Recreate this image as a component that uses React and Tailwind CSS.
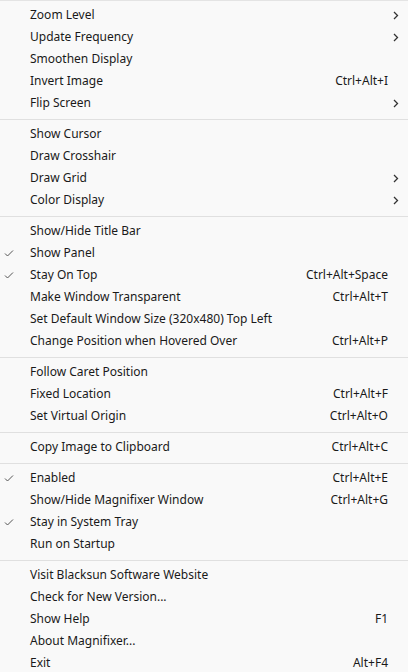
import React from 'react';

const groups = [
  [
    { label: 'Zoom Level', sub: true },
    { label: 'Update Frequency', sub: true },
    { label: 'Smoothen Display' },
    { label: 'Invert Image', key: 'Ctrl+Alt+I' },
    { label: 'Flip Screen', sub: true },
  ],
  [
    { label: 'Show Cursor' },
    { label: 'Draw Crosshair' },
    { label: 'Draw Grid', sub: true },
    { label: 'Color Display', sub: true },
  ],
  [
    { label: 'Show/Hide Title Bar' },
    { label: 'Show Panel', checked: true },
    { label: 'Stay On Top', checked: true, key: 'Ctrl+Alt+Space' },
    { label: 'Make Window Transparent', key: 'Ctrl+Alt+T' },
    { label: 'Set Default Window Size (320x480) Top Left' },
    { label: 'Change Position when Hovered Over', key: 'Ctrl+Alt+P' },
  ],
  [
    { label: 'Follow Caret Position' },
    { label: 'Fixed Location', key: 'Ctrl+Alt+F' },
    { label: 'Set Virtual Origin', key: 'Ctrl+Alt+O' },
  ],
  [{ label: 'Copy Image to Clipboard', key: 'Ctrl+Alt+C' }],
  [
    { label: 'Enabled', checked: true, key: 'Ctrl+Alt+E' },
    { label: 'Show/Hide Magnifixer Window', key: 'Ctrl+Alt+G' },
    { label: 'Stay in System Tray', checked: true },
    { label: 'Run on Startup' },
  ],
  [
    { label: 'Visit Blacksun Software Website' },
    { label: 'Check for New Version...' },
    { label: 'Show Help', key: 'F1' },
    { label: 'About Magnifixer...' },
    { label: 'Exit', key: 'Alt+F4' },
  ],
];

const Check = () => (
  <svg width="10" height="8" viewBox="0 0 10 8" className="ml-[4px]">
    <path d="M1 4.5 L3.5 7 L9 1.5" fill="none" stroke="#555" strokeWidth="1" />
  </svg>
);

const Chevron = () => (
  <svg width="6" height="9" viewBox="0 0 6 9">
    <path d="M1 1 L4.5 4.5 L1 8" fill="none" stroke="#333" strokeWidth="1.3" />
  </svg>
);

const MenuRow = ({ item }) => (
  <div className="flex h-[22px] items-center">
    <div className="flex w-[30px] items-center">{item.checked && <Check />}</div>
    <span className="flex-1 whitespace-nowrap">{item.label}</span>
    {item.key && <span className="whitespace-nowrap">{item.key}</span>}
    <div className="flex w-[20px] items-center pl-[5px]">{item.sub && <Chevron />}</div>
  </div>
);

export default function App() {
  return (
    <div
      className="h-[672px] w-[408px] overflow-hidden bg-[#f9f9f9] text-[12px] text-[#1a1a1a]"
      style={{ fontFamily: '"Noto Sans", "Noto Sans CJK KR", sans-serif' }}
    >
      <div className="h-px bg-[#e4e4e4]" />
      <div className="pt-[3px]">
        {groups.map((group, i) => (
          <div key={i}>
            {i > 0 && <div className="mb-[3px] mt-[5px] h-px bg-[#e0e0e0]" />}
            {group.map((item) => (
              <MenuRow key={item.label} item={item} />
            ))}
          </div>
        ))}
      </div>
    </div>
  );
}
